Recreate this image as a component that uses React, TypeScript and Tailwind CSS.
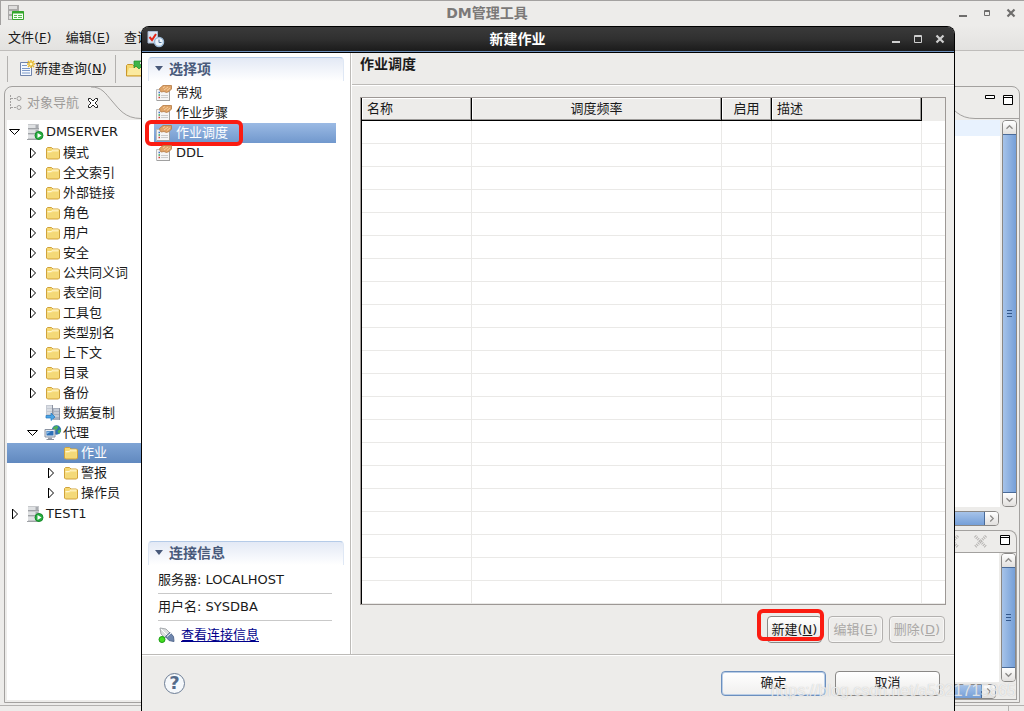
import { useState, type ReactNode } from "react";
import { clsx } from "clsx";

type TreeIcon = "folder" | "server" | "replica" | "agent";

interface TreeNode {
  label: string;
  depth: number;
  icon: TreeIcon;
  state?: "open" | "closed";
}

const treeNodes: TreeNode[] = [
  { label: "DMSERVER", depth: 0, icon: "server", state: "open" },
  { label: "模式", depth: 1, icon: "folder", state: "closed" },
  { label: "全文索引", depth: 1, icon: "folder", state: "closed" },
  { label: "外部链接", depth: 1, icon: "folder", state: "closed" },
  { label: "角色", depth: 1, icon: "folder", state: "closed" },
  { label: "用户", depth: 1, icon: "folder", state: "closed" },
  { label: "安全", depth: 1, icon: "folder", state: "closed" },
  { label: "公共同义词", depth: 1, icon: "folder", state: "closed" },
  { label: "表空间", depth: 1, icon: "folder", state: "closed" },
  { label: "工具包", depth: 1, icon: "folder", state: "closed" },
  { label: "类型别名", depth: 1, icon: "folder" },
  { label: "上下文", depth: 1, icon: "folder", state: "closed" },
  { label: "目录", depth: 1, icon: "folder", state: "closed" },
  { label: "备份", depth: 1, icon: "folder", state: "closed" },
  { label: "数据复制", depth: 1, icon: "replica" },
  { label: "代理", depth: 1, icon: "agent", state: "open" },
  { label: "作业", depth: 2, icon: "folder" },
  { label: "警报", depth: 2, icon: "folder", state: "closed" },
  { label: "操作员", depth: 2, icon: "folder", state: "closed" },
  { label: "TEST1", depth: 0, icon: "server", state: "closed" },
];

const pages = ["常规", "作业步骤", "作业调度", "DDL"];

const depthPadding = ["pl-0", "pl-[18px]", "pl-9"];

function FolderIcon() {
  return (
    <svg width="16" height="16" viewBox="0 0 16 16" className="shrink-0">
      <path d="M1.500 13V3.500l1-1h4l1.500 1.500h5.500l1 1V13l-1 1h-11z" fill="#f6d872" stroke="#d0a23c" />
      <path d="M2.500 12V6.500h4l1-1.500h6V12z" fill="#fae596" />
      <path d="M2.500 13V8.500L8 7h5.500v6z" fill="#f4d978" />
      <path d="M2.500 6.500h4l1-1.500h6" fill="none" stroke="#fff6cf" />
    </svg>
  );
}

function ServerIcon() {
  return (
    <svg width="17" height="16" viewBox="0 0 17 16" className="shrink-0">
      <path d="M1 0h11v15H1z" fill="#c6c8cb" />
      <path d="M1 1h7v3H1zM1 6h7v3H1zM1 11h7v3H1z" fill="#dfe1e3" />
      <path d="M9 1h2v3H9zM9 6h2v3H9zM9 11h2v3H9z" fill="#a9acb1" />
      <path d="M1 4.500h11M1 9.500h11M0 15.500h12" stroke="#9fa2a6" />
      <circle cx="12" cy="11.500" r="4" fill="#27ad40" stroke="#168b2b" />
      <path d="M10.500 9v5l4-2.500z" fill="#fff" />
    </svg>
  );
}

function ReplicaIcon() {
  return (
    <svg width="16" height="16" viewBox="0 0 16 16" className="shrink-0">
      <path d="M1 0h7v12H1z" fill="#c5cad3" />
      <path d="M8 3h7v12H8z" fill="#aab1be" />
      <path d="M2 2h5M2 5h5M2 8h5" stroke="#eef1f5" />
      <path d="M9 5h5M9 8h5M9 11h5" stroke="#e3e7ee" />
      <path d="M7.500 0v13M14.500 3v12" stroke="#8b92a0" />
      <path d="M1 10.500h5V8l4 4-4 3.500V13H1z" fill="#4aa5e6" stroke="#2277bd" strokeWidth=".7" />
    </svg>
  );
}

function AgentIcon() {
  return (
    <svg width="18" height="16" viewBox="0 0 18 16" className="-mr-px -ml-px shrink-0">
      <circle cx="12.500" cy="5" r="4.700" fill="#2f73b4" />
      <path d="M9 2.500L12.500 .500l2 1.500-2 3-2.500.500zM13.500 6l3-2 .500 2-2 3z" fill="#4eb058" />
      <path d="M1 4.500h10V12H1z" fill="#e8ebef" stroke="#8a93a2" />
      <path d="M2.500 6h7v4.500h-7z" fill="#2d70b8" />
      <path d="M3 6.500h4L3 9z" fill="#85b9e6" />
      <path d="M4 12.500h4v1.500H4z" fill="#9aa1ac" />
      <path d="M2.500 14.500h7.500" stroke="#8a919d" />
    </svg>
  );
}

function PageIcon() {
  return (
    <svg width="16" height="16" viewBox="0 0 16 16" className="shrink-0">
      <path d="M.500 4.500h13v11H.500z" fill="#f5f5f5" stroke="#bcbcbc" />
      <path d="M1 15.500h13M13.500 6v10" stroke="#a0a0a0" />
      <path d="M2.500 7.500h1.500" stroke="#4579c9" strokeWidth="1.500" />
      <path d="M2.500 10h1.500" stroke="#3ba14c" strokeWidth="1.500" />
      <path d="M2.500 12.500h1.500" stroke="#d3453b" strokeWidth="1.500" />
      <path d="M5 10.500h7M5 12.500h7" stroke="#cbcbcb" />
      <path d="M3.500 3.500L7 .500h8.500V4L13 6.500 10.500 7.500 8 6.500 5 7 4 5.500z" fill="#dfa468" stroke="#b57a42" strokeWidth=".8" />
      <path d="M7 3l2-1.500M8 5l4-3M11 5.500l3-2.500" stroke="#f6d0a0" />
    </svg>
  );
}

const treeIcons: Record<TreeIcon, ReactNode> = {
  folder: <FolderIcon />,
  server: <ServerIcon />,
  replica: <ReplicaIcon />,
  agent: <AgentIcon />,
};

function Expander({ state }: { state?: "open" | "closed" }) {
  return (
    <svg width="12" height="12" viewBox="0 0 12 12" className="mr-1.5 shrink-0" fill="#fff" stroke="#000">
      {state === "open" && <path d="M.500 3.500h10L5.500 8.500z" />}
      {state === "closed" && <path d="M3.500 1v10L8.500 6z" />}
    </svg>
  );
}

function WindowButtons({ dark = false }: { dark?: boolean }) {
  return (
    <div className={clsx("flex", dark ? "gap-1.5 text-[#cfcfcf]" : "gap-2 text-[#6e6d6c]")}>
      <button aria-label="最小化" className="size-4">
        <svg viewBox="0 0 16 16">
          <path d="M4 11h8" stroke="currentColor" strokeWidth="2" />
        </svg>
      </button>
      <button aria-label="最大化" className="size-4">
        <svg viewBox="0 0 16 16" fill="none" stroke="currentColor">
          {dark ? <path d="M4.500 4.500h7v7h-7zM4 5.500h8" /> : <path d="M5.500 5.500h5v5h-5zM5 6.500h6" />}
        </svg>
      </button>
      <button aria-label="关闭" className="size-4">
        <svg viewBox="0 0 16 16" fill="none" stroke="currentColor" strokeWidth="2.200">
          <path d="M4.500 4.500l7 7M11.500 4.500l-7 7" />
        </svg>
      </button>
    </div>
  );
}

function ScrollArrow({ dir }: { dir: "up" | "down" | "right" }) {
  const d = {
    up: "M4 9l3.500-3.500L11 9",
    down: "M4 6l3.500 3.500L11 6",
    right: "M6 4l3.500 3.500L6 11",
  };
  return (
    <svg width="13" height="13" viewBox="0 0 15 15" fill="none" stroke="#8d8b89" strokeWidth="1.500">
      <path d={d[dir]} />
    </svg>
  );
}

function VScroll() {
  return (
    <div className="ml-0.5 flex w-[15px] shrink-0 flex-col overflow-hidden rounded-[4px] border border-[#8a8886]">
      <button aria-label="向上" className="h-[13px] bg-gradient-to-b from-white to-[#e2e0de]">
        <ScrollArrow dir="up" />
      </button>
      <div className="flex flex-1 flex-col items-center justify-center gap-0.5 border-y border-[#4a6b99] bg-gradient-to-r from-[#a6c3e9] to-[#759fd8]">
        <i className="h-px w-[5px] bg-[#33588c]" />
        <i className="h-px w-[5px] bg-[#33588c]" />
        <i className="h-px w-[5px] bg-[#33588c]" />
      </div>
      <button aria-label="向下" className="h-[13px] bg-gradient-to-b from-white to-[#e2e0de]">
        <ScrollArrow dir="down" />
      </button>
    </div>
  );
}

function HScroll() {
  return (
    <div className="mr-5 flex h-[15px] overflow-hidden rounded-[4px] border border-[#8a8886]">
      <div className="flex-1 border-r border-[#4a6b99] bg-gradient-to-b from-[#a6c3e9] to-[#759fd8]" />
      <button aria-label="向右" className="w-[13px] bg-gradient-to-b from-white to-[#e2e0de]">
        <ScrollArrow dir="right" />
      </button>
    </div>
  );
}

function TabCurve() {
  return (
    <svg width="50" height="32" viewBox="0 0 50 32" fill="none" className="shrink-0">
      <path d="M0 0C11 0 14 6 21 14S34 31.500 50 31.500" stroke="#a3a19f" />
    </svg>
  );
}

function MaximizeGlyph() {
  return (
    <svg width="10" height="10" viewBox="0 0 10 10" fill="#fff" stroke="#000">
      <path d="M.500 .500h9v9h-9zM0 2.500h10" />
    </svg>
  );
}

function Navigator() {
  const [selected, setSelected] = useState("作业");

  return (
    <aside className="flex w-[300px] shrink-0 flex-col rounded-t-lg border border-[#a3a19f]">
      <header className="flex h-8 items-center pl-1">
        <svg width="14" height="16" viewBox="0 0 14 16" fill="none" stroke="#a3a1a0" className="shrink-0">
          <path d="M1.500 0v14M2 3.500h5M2 12.500h5" strokeDasharray="2 1" />
          <circle cx="10" cy="3.500" r="2" />
          <circle cx="10" cy="12.500" r="2" />
        </svg>
        <span className="ml-1 text-[#9d9b99]">对象导航</span>
        <button aria-label="关闭对象导航" className="ml-2">
          <svg width="12" height="12" viewBox="0 0 12 12" fill="#fff" stroke="#222">
            <path d="M1.500 1.500h2L6 4l2.500-2.500h2v2L8 6l2.500 2.500v2h-2L6 8l-2.500 2.500h-2v-2L4 6 1.500 3.500z" />
          </svg>
        </button>
        <div className="-ml-2 self-start">
          <TabCurve />
        </div>
      </header>
      <ul className="mx-0.5 mt-px mb-0.5 flex-1 bg-white pt-px">
        {treeNodes.map((node) => (
          <li key={node.label}>
            <button
              onClick={() => setSelected(node.label)}
              className={clsx(
                "flex w-full items-center",
                node.depth === 0 ? "h-[22px]" : "h-5",
                node.label === selected && "bg-gradient-to-b from-[#7fa4d5] to-[#6189bf] text-white",
              )}
            >
              <span className={clsx("flex items-center pr-0.5", depthPadding[node.depth])}>
                <span className="w-0.5" />
                <Expander state={node.state} />
                {treeIcons[node.icon]}
              </span>
              <span className="whitespace-nowrap">{node.label}</span>
            </button>
          </li>
        ))}
      </ul>
    </aside>
  );
}

function EditorArea() {
  return (
    <main className="flex min-w-0 flex-1 flex-col rounded-t-lg border border-[#a3a19f]">
      <header className="flex h-8 justify-end">
        <TabCurve />
        <div className="flex w-[44px] gap-2 border-b border-[#a3a19f] pt-2 pl-2.5">
          <button aria-label="最小化编辑器" className="size-2.5">
            <svg viewBox="0 0 10 10" fill="#fff" stroke="#000">
              <path d="M.500 .500h9v3h-9z" />
            </svg>
          </button>
          <button aria-label="最大化编辑器" className="size-2.5">
            <MaximizeGlyph />
          </button>
        </div>
      </header>
      <div className="mt-px mr-0.5 flex min-h-0 flex-1">
        <div className="flex-1 bg-white">
          <div className="h-4 bg-[#e8f2fe]" />
        </div>
        <VScroll />
      </div>
      <div className="mt-1">
        <HScroll />
      </div>
      <section className="mt-1 mr-0.5 mb-0.5 flex h-[170px] flex-col rounded-tr-lg border border-l-0 border-[#a3a19f]">
        <header className="flex h-[22px] items-start justify-end gap-3 border-b border-[#a3a19f] pt-1 pr-1.5">
          <svg width="42" height="14" viewBox="0 0 42 14" fill="none" stroke="#b5b3b1">
            <path d="M1 1l11 11M12 1L1 12M29 1l11 11M40 1L29 12" strokeWidth="3" strokeDasharray="1 1" />
          </svg>
          <button aria-label="最大化视图">
            <MaximizeGlyph />
          </button>
        </header>
        <div className="flex min-h-0 flex-1">
          <div className="flex-1 bg-white" />
          <VScroll />
        </div>
        <div className="mt-0.5">
          <HScroll />
        </div>
      </section>
    </main>
  );
}

function SectionTitle({ children }: { children: ReactNode }) {
  return (
    <h2 className="mx-1.5 flex h-6 items-center gap-1.5 rounded-t border-x border-t border-[#dfe8f5] border-t-[#b5cbe8] bg-gradient-to-b from-[#e3e9f5] to-white pb-0.5 pl-1.5 text-sm font-bold text-[#48597a]">
      <svg width="8" height="5" viewBox="0 0 8 5" fill="#48597a">
        <path d="M0 0h8L4 5z" />
      </svg>
      {children}
    </h2>
  );
}

function Highlight({ className }: { className: string }) {
  return <span className={clsx("pointer-events-none absolute rounded-md border-4 border-[#fb1c12]", className)} />;
}

function ActionButton({ label, hotkey, disabled }: { label: string; hotkey: string; disabled?: boolean }) {
  return (
    <button
      disabled={disabled}
      className={clsx(
        "h-[27px] rounded-[4px] border px-1 whitespace-nowrap",
        disabled
          ? "border-[#b3b1af] text-[#aaa8a6] shadow-[inset_0_0_0_1px_#f7f6f5]"
          : "border-[#8a8886] bg-gradient-to-b from-white to-[#e9e7e5]",
      )}
    >
      {label}(<u>{hotkey}</u>)
    </button>
  );
}

function JobDialog() {
  const [page, setPage] = useState("作业调度");

  return (
    <div
      role="dialog"
      aria-label="新建作业"
      className="absolute top-[25px] right-[69px] bottom-0 left-[141px] flex flex-col rounded-t-lg border-x border-t border-black bg-[#edecea]"
    >
      <div className="flex h-[25px] items-center rounded-t-md border-b border-[#6c8fbc] bg-gradient-to-b from-[#3a3a3a] via-[#303030] to-[#1b1b1b] pr-1.5 pl-[5px] text-white">
        <div className="flex-1">
          <svg width="18" height="18" viewBox="0 0 18 18">
            <path d="M1 1.500h9.500v11.500H1z" fill="#dce5f1" stroke="#a9bbd4" />
            <path d="M2.500 7l2.500 3 4-6" fill="none" stroke="#e32618" strokeWidth="2" />
            <circle cx="12" cy="12" r="4.500" fill="#edf5fc" stroke="#9dbbd8" strokeWidth="1.500" />
            <path d="M12 9.500v3h2.500" fill="none" stroke="#54779d" />
          </svg>
        </div>
        <h1 className="mr-15 text-sm font-bold">新建作业</h1>
        <div className="flex flex-1 justify-end">
          <WindowButtons dark />
        </div>
      </div>

      <div className="flex min-h-0 flex-1 border-t border-black">
        <nav className="flex w-[209px] shrink-0 flex-col border-r border-[#bdbbb8] bg-white pt-1">
          <SectionTitle>选择项</SectionTitle>
          <ul className="mt-0.5 mr-3.5 ml-3">
            {pages.map((name) => (
              <li key={name} className="relative">
                <button
                  onClick={() => setPage(name)}
                  className={clsx(
                    "flex h-5 w-full items-center gap-1 pl-0.5",
                    name === page && "bg-gradient-to-b from-[#9bbae4] to-[#7198cd] text-white",
                  )}
                >
                  <PageIcon />
                  {name}
                </button>
                {name === "作业调度" && <Highlight className="-top-[3px] -left-[9px] h-[26px] w-[98px]" />}
              </li>
            ))}
          </ul>
          <div className="mt-auto h-[113px]">
            <SectionTitle>连接信息</SectionTitle>
            <div className="mr-[18px] ml-4">
              <p className="flex h-[29px] items-center border-b border-[#c9c9c9] pt-0.5">服务器: LOCALHOST</p>
              <p className="flex h-[27px] items-center border-b border-[#c9c9c9]">用户名: SYSDBA</p>
              <a href="#connection" className="flex h-7 items-center gap-1.5 text-[#00008b]">
                <svg width="17" height="16" viewBox="0 0 17 16">
                  <path d="M2 1l6 1 4 4-5 5-4-4z" fill="#dcdedf" stroke="#a6aaae" />
                  <path d="M7.500 9.500l4.500-4 3.500 4 .500 5-5-1z" fill="#6f86ad" stroke="#566b90" />
                  <path d="M3 2l6 6M9 9.500l4-3.500" stroke="#fff" />
                  <circle cx="4" cy="12.500" r="3" fill="#42de20" stroke="#1a9b12" />
                </svg>
                <span className="underline underline-offset-2">查看连接信息</span>
              </a>
            </div>
          </div>
        </nav>

        <section className="flex min-w-0 flex-1 flex-col border-l border-white">
          <h2 className="h-8 border-b border-[#bdbbb8] pt-px pl-2 text-sm font-bold shadow-[0_1px_0_#fff]">作业调度</h2>
          <div className="mx-2 mt-3 border border-[#9d9895] bg-white">
            <table className="w-full table-fixed border-separate border-spacing-0 border-l border-black">
              <colgroup>
                <col className="w-[110px]" />
                <col className="w-[250px]" />
                <col className="w-[50px]" />
                <col className="w-[150px]" />
                <col />
              </colgroup>
              <thead>
                <tr className="h-[23px] bg-[#edecea] [&>th]:border-black [&>th]:p-0 [&>th]:px-[5px] [&>th]:font-normal [&>th:not(:last-child)]:border-r [&>th:not(:last-child)]:border-b [&>th:not(:last-child)]:shadow-[inset_-1px_-1px_0_#9d9b99,inset_1px_1px_0_#fff]">
                  <th className="text-left">名称</th>
                  <th>调度频率</th>
                  <th>启用</th>
                  <th className="text-left">描述</th>
                  <th aria-hidden="true" />
                </tr>
              </thead>
              <tbody>
                {Array.from({ length: 21 }, (_, row) => (
                  <tr key={row} className="h-[23px] [&>td]:border-b [&>td]:border-[#eae9e7] [&>td]:p-0 [&>td:not(:last-child)]:border-r">
                    <td />
                    <td />
                    <td />
                    <td />
                    <td />
                  </tr>
                ))}
              </tbody>
            </table>
          </div>
          <div className="mt-[11px] mr-[9px] flex justify-end gap-1.5">
            <div className="relative">
              <ActionButton label="新建" hotkey="N" />
              <Highlight className="-top-[7px] -right-0.5 bottom-0.5 -left-2.5" />
            </div>
            <ActionButton label="编辑" hotkey="E" disabled />
            <ActionButton label="删除" hotkey="D" disabled />
          </div>
        </section>
      </div>

      <footer className="flex h-[57px] shrink-0 items-center gap-[9px] border-t border-[#bdbbb8] pr-3.5 pl-[22px] shadow-[inset_0_1px_0_#fff]">
        <button aria-label="帮助" className="mr-auto size-[21px] rounded-full border border-[#6c7d95] bg-[#f5f8fb] text-lg leading-none font-bold text-[#546a8a]">
          ?
        </button>
        <button className="h-[25px] w-[105px] rounded-[4px] border border-[#6b8fbe] bg-gradient-to-b from-white to-[#f0efee] shadow-[inset_0_0_0_1px_#b9cde6]">
          确定
        </button>
        <button className="h-[25px] w-[105px] rounded-[4px] border border-[#8a8886] bg-gradient-to-b from-white to-[#ecebe9]">取消</button>
      </footer>
    </div>
  );
}

export default function App() {
  return (
    <div className="relative flex h-screen flex-col overflow-hidden border-t border-[#a3a1a0] bg-[#edecea] font-['DejaVu_Sans','Noto_Sans_CJK_SC',sans-serif] text-[13px] leading-5 text-[#1a1a1a]">
      <div className="flex h-6 shrink-0 items-center border-l border-[#a3a1a0] pr-[5px] pl-1.5">
        <div className="flex-1">
          <svg width="18" height="18" viewBox="0 0 18 18">
            <path d="M1 1h11v15H1z" fill="#aaa9a8" />
            <path d="M2 2h8v3H2zM2 7h8v3H2zM2 12h5v3H2z" fill="#dedddc" />
            <path d="M5.500 7.500h11v8h-11z" fill="#f5fff2" stroke="#35a52d" />
            <path d="M5 8.500h12" stroke="#35a52d" strokeWidth="2" />
            <path d="M7 11.500h3M11 11.500h4M7 13.500h3M11 13.500h4" stroke="#58b950" />
          </svg>
        </div>
        <h1 className="mr-13 text-sm font-bold text-[#7b7978]">DM管理工具</h1>
        <div className="flex flex-1 justify-end">
          <WindowButtons />
        </div>
      </div>

      <nav className="flex h-[26px] shrink-0 items-center gap-3.5 border-b border-[#bfbdbb] bg-gradient-to-b from-[#edecea] to-[#e3e2e0] pl-2">
        <button>
          文件(<u>F</u>)
        </button>
        <button>
          编辑(<u>E</u>)
        </button>
        <button>查询</button>
      </nav>

      <div className="flex h-[35px] shrink-0 items-center pl-[7px]">
        <span className="h-[26px] w-px bg-[#b3b1af]" />
        <button className="ml-3 flex items-center">
          <svg width="15" height="17" viewBox="0 0 15 17">
            <path d="M.500 2.500h11v13H.500z" fill="#f4f8fd" stroke="#7084ac" />
            <path d="M2 5.500h5M2 8.500h8M2 10.500h8M2 13h8" stroke="#7d99c8" />
            <path d="M11 0v8M7 4h8M8 1l6 6M14 1L8 7" stroke="#e5b72a" strokeWidth="1.500" />
            <circle cx="11" cy="4" r="1.500" fill="#fff8c4" />
          </svg>
          <span>
            新建查询(<u>N</u>)
          </span>
        </button>
        <span className="mx-2 h-7 w-px bg-[#b3b1af]" />
        <button aria-label="打开" className="ml-0.5">
          <svg width="18" height="18" viewBox="0 0 18 18">
            <path d="M.500 16V5.500l1-1h5L8 6h8.500v10z" fill="#f5d76e" stroke="#c9972c" />
            <path d="M1 15l2-7h13v7z" fill="#fbeaa0" />
            <path d="M8 1h7l-2 2 3 3-3 3-3-3-2 2z" fill="#3eb548" stroke="#218e2e" strokeWidth=".7" />
          </svg>
        </button>
      </div>

      <div className="mx-1 flex min-h-0 flex-1 gap-1">
        <Navigator />
        <EditorArea />
      </div>
      <footer className="mt-0.5 flex h-1.5 shrink-0 justify-end border-t border-[#b3b1af] pr-[15px]">
        <span className="w-px bg-[#b3b1af]" />
      </footer>

      <JobDialog />

      <p className="pointer-events-none absolute right-2 bottom-2 font-['Liberation_Sans',sans-serif] text-base text-white/70 [text-shadow:0_0_1px_#9999]">
        https://blog.csdn.net/a5321715865
      </p>
    </div>
  );
}
